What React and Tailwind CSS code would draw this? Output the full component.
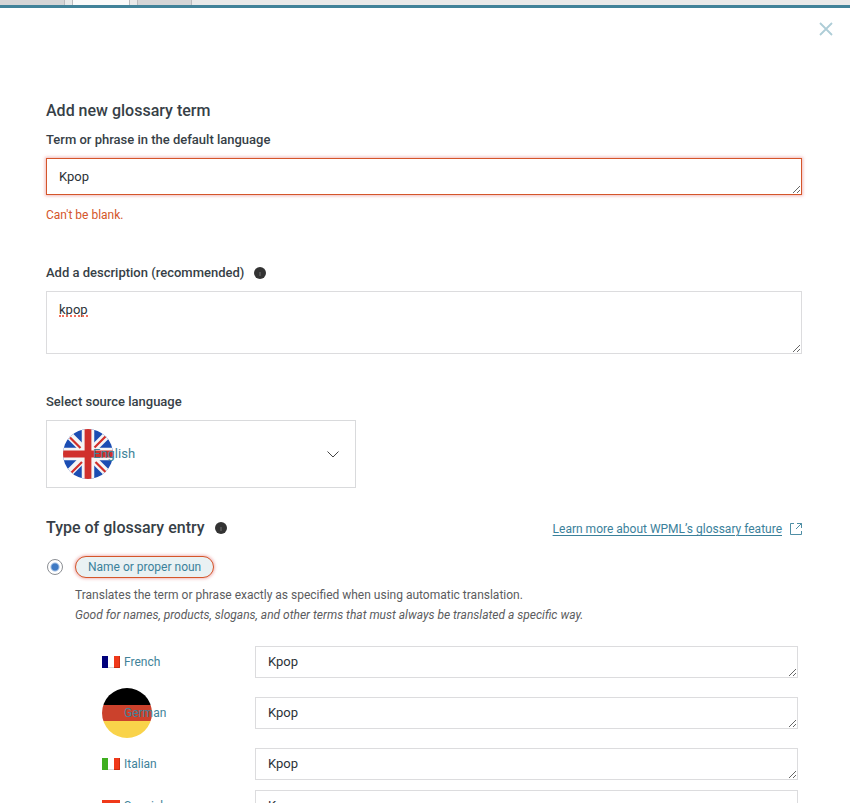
import { useState } from "react";

const tabs = [
    { id: "prev", className: "w-[65px] border-r bg-[#d5d5d6]" },
    { id: "current", className: "ml-[7px] w-[58px] border-x bg-[#fafafa]" },
    { id: "next", className: "ml-[7px] w-[55px] border-x bg-[#d5d5d6]" },
];

const languages = [
    { code: "fr", name: "French" },
    { code: "de", name: "German" },
    { code: "it", name: "Italian" },
    { code: "es", name: "Spanish" },
];

const InfoIcon = () => (
    <svg viewBox="0 0 12 12" className="size-3" aria-hidden="true">
        <circle cx="6" cy="6" r="6" fill="#333333" />
        <rect x="5.4" y="5" width="1.2" height="4" fill="#666666" />
    </svg>
);

const BritishFlag = () => (
    <svg viewBox="0 0 50 50" className="size-[50px]" aria-hidden="true">
        <clipPath id="gb-circle">
            <circle cx="25" cy="25" r="25" />
        </clipPath>
        <g clipPath="url(#gb-circle)">
            <rect width="50" height="50" fill="#1b4db3" />
            <path d="M4 4L46 46M46 4L4 46" stroke="#f5f5f5" strokeWidth="7.5" />
            <path d="M25 0V50M0 25H50" stroke="#f5f5f5" strokeWidth="12.5" />
            <path
                d="M7 8.5L17.5 19M43 43.5L32.5 33M42.5 7.5L31.5 18.5M8.5 43.5L19 33"
                stroke="#d0302c"
                strokeWidth="2.2"
            />
            <path d="M25 0V50M0 25H50" stroke="#d0302c" strokeWidth="6.8" />
        </g>
    </svg>
);

const GermanFlag = () => (
    <svg viewBox="0 0 50 50" className="size-[50px] shrink-0" aria-hidden="true">
        <clipPath id="de-circle">
            <circle cx="25" cy="25" r="25" />
        </clipPath>
        <g clipPath="url(#de-circle)">
            <rect width="50" height="17" fill="#000000" />
            <rect y="17" width="50" height="16" fill="#cb412c" />
            <rect y="33" width="50" height="17" fill="#f9d34a" />
        </g>
    </svg>
);

const SmallFlag = ({ code }) => (
    <svg viewBox="0 0 18 12" className="h-3 w-[18px] shrink-0" aria-hidden="true">
        {code === "es" ? (
            <>
                <rect width="18" height="12" fill="#f0391a" />
                <rect y="4" width="18" height="4" fill="#fbd117" />
            </>
        ) : (
            <>
                <rect width="6" height="12" fill={code === "fr" ? "#00007b" : "#3fae20"} />
                <rect x="6" width="6" height="12" fill="#ffffff" />
                <rect x="6" y="11" width="6" height="1" fill="#d9d9d9" />
                <rect x="12" width="6" height="12" fill="#f0391a" />
                <path d="M17.5 0V11.5H12" fill="none" stroke="#c92b10" />
            </>
        )}
    </svg>
);

function App() {
    const [term, setTerm] = useState("Kpop");
    const [description, setDescription] = useState("kpop");
    const [source, setSource] = useState("en");
    const [translations, setTranslations] = useState({
        fr: "Kpop",
        de: "Kpop",
        it: "Kpop",
        es: "Kpop",
    });

    const handleTranslation = (code, value) => {
        setTranslations({ ...translations, [code]: value });
    };

    return (
        <div className="flex h-screen flex-col overflow-hidden bg-white font-[Roboto,sans-serif] text-[13px] leading-5 text-[#2c3338]">
            <div className="flex h-[5px] shrink-0 bg-[#e9e9e9]">
                {tabs.map((tab) => (
                    <div key={tab.id} className={`border-[#bbbbbd] ${tab.className}`} />
                ))}
            </div>

            <div className="min-h-0 flex-1 overflow-hidden border-t-3 border-[#418299]">
                <div className="flex justify-end pt-[14px] pr-[17px]">
                    <button type="button" aria-label="Close" className="cursor-pointer">
                        <svg viewBox="0 0 14 14" className="size-[14px]">
                            <path d="M1 1L13 13M13 1L1 13" stroke="#aecdd7" strokeWidth="1.8" />
                        </svg>
                    </button>
                </div>

                <form className="mt-[63px] mr-12 ml-[46px] flex flex-col">
                    <h2 className="text-base leading-6 font-medium text-[#373f47]">
                        Add new glossary term
                    </h2>
                    <label htmlFor="term" className="mt-[7px] font-medium text-[#373f47]">
                        Term or phrase in the default language
                    </label>
                    <textarea
                        id="term"
                        rows={1}
                        spellCheck={false}
                        value={term}
                        onChange={(e) => setTerm(e.target.value)}
                        className="mt-2 block h-[37px] w-full overflow-hidden border border-[#d4562a] px-3 py-2 shadow-[0_0_3px_1px_rgba(214,54,56,0.35)] outline-none"
                    />
                    <p className="mt-[10px] text-xs leading-5 text-[#d4562a]">Can't be blank.</p>

                    <div className="mt-[38px] flex items-center gap-[10px]">
                        <label htmlFor="description" className="font-medium text-[#373f47]">
                            Add a description (recommended)
                        </label>
                        <InfoIcon />
                    </div>
                    <div className="relative mt-2">
                        <textarea
                            id="description"
                            spellCheck={false}
                            value={description}
                            onChange={(e) => setDescription(e.target.value)}
                            className="block h-[63px] w-full border border-[#dcdcde] px-3 py-2 outline-none"
                        />
                        {description === "kpop" && (
                            <span className="absolute top-6 left-[13px] w-[29px] border-b-2 border-dotted border-[#f0705c]" />
                        )}
                    </div>

                    <label htmlFor="source" className="mt-[38px] font-medium text-[#373f47]">
                        Select source language
                    </label>
                    <div className="relative mt-2 h-[68px] w-[310px] border border-[#d9dadc]">
                        <span className="absolute top-2 left-4">
                            <BritishFlag />
                        </span>
                        <select
                            id="source"
                            value={source}
                            onChange={(e) => setSource(e.target.value)}
                            className="relative size-full appearance-none bg-transparent pl-[46px] text-[#418299] outline-none"
                        >
                            <option value="en">English</option>
                            <option value="fr">French</option>
                            <option value="de">German</option>
                        </select>
                        <svg
                            viewBox="0 0 12 7"
                            className="pointer-events-none absolute top-[30px] right-4 h-[7px] w-3"
                            aria-hidden="true"
                        >
                            <path d="M0.5 0.5L6 6L11.5 0.5" fill="none" stroke="#444444" />
                        </svg>
                    </div>

                    <div className="mt-7 flex items-end justify-between">
                        <div className="flex items-center gap-[10px]">
                            <h2 className="text-base leading-6 font-medium text-[#373f47]">
                                Type of glossary entry
                            </h2>
                            <InfoIcon />
                        </div>
                        <a
                            href="#glossary"
                            className="flex items-center gap-2 text-xs leading-[22px] text-[#3b819b]"
                        >
                            <span className="underline underline-offset-2">
                                Learn more about WPML’s glossary feature
                            </span>
                            <svg viewBox="0 0 12 12" className="size-3" aria-hidden="true">
                                <path
                                    d="M4 0.5H0.5V11.5H11.5V8M7 0.5H11.5V5M11.5 0.5L6 6"
                                    fill="none"
                                    stroke="#3b819b"
                                    strokeWidth="0.9"
                                />
                            </svg>
                        </a>
                    </div>

                    <div className="mt-4 flex items-center gap-3">
                        <input
                            id="proper-noun"
                            type="radio"
                            name="entry-type"
                            defaultChecked
                            className="ml-px size-4 appearance-none rounded-full border border-[#8c8f94] bg-white bg-[radial-gradient(circle,#3f7ac4_3px,transparent_5px)]"
                        />
                        <label
                            htmlFor="proper-noun"
                            className="rounded-full border border-[#d4562a] bg-[#e9f1f3] px-3 text-xs leading-5 text-[#3b819b] shadow-[0_0_3px_1px_rgba(214,54,56,0.35)]"
                        >
                            Name or proper noun
                        </label>
                    </div>
                    <div className="mt-[7px] ml-[29px] text-xs leading-5 text-[#5b5c5e]">
                        <p>
                            Translates the term or phrase exactly as specified when using automatic
                            translation.
                        </p>
                        <p className="[font-style:oblique_12deg]">
                            Good for names, products, slogans, and other terms that must always be
                            translated a specific way.
                        </p>
                    </div>

                    <div className="mt-4 mr-1 ml-14 flex flex-col">
                        {languages.map(({ code, name }) => (
                            <div key={code} className="flex items-center py-[5px]">
                                <div className="relative flex w-[153px] shrink-0 items-center">
                                    {code === "de" ? <GermanFlag /> : <SmallFlag code={code} />}
                                    <label
                                        htmlFor={`translation-${code}`}
                                        className="absolute left-[22px] text-xs leading-5 text-[#418299]"
                                    >
                                        {name}
                                    </label>
                                </div>
                                <textarea
                                    id={`translation-${code}`}
                                    rows={1}
                                    spellCheck={false}
                                    value={translations[code]}
                                    onChange={(e) => handleTranslation(code, e.target.value)}
                                    className="block h-8 min-w-0 flex-1 overflow-hidden border border-[#dcdcde] px-3 py-[5px] outline-none"
                                />
                            </div>
                        ))}
                    </div>
                </form>
            </div>
        </div>
    );
}

export default App;
